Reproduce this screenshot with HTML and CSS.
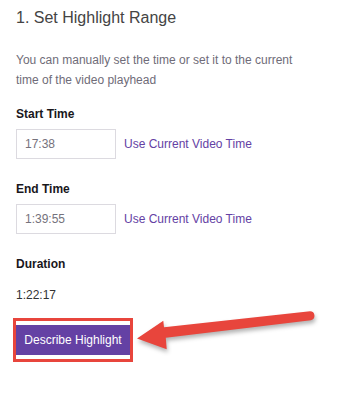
FILE: index.html
```html
<!DOCTYPE html>
<html lang="en">
<head>
  <meta charset="UTF-8" />
  <meta name="viewport" content="width=device-width, initial-scale=1.0"/>
  <title>Set Highlight Range</title>
  <link rel="stylesheet" href="styles.css">
</head>
<body>
  <div class="panel">
    <h2 class="panel-title">1. Set Highlight Range</h2>
    <p class="panel-desc">You can manually set the time or set it to the current time of the video playhead</p>

    <div class="field">
      <label class="field-label" for="start">Start Time</label>
      <div class="field-row">
        <input class="time-input" id="start" type="text" value="17:38">
        <a class="use-current" href="#">Use Current Video Time</a>
      </div>
    </div>

    <div class="field">
      <label class="field-label" for="end">End Time</label>
      <div class="field-row">
        <input class="time-input" id="end" type="text" value="1:39:55">
        <a class="use-current" href="#">Use Current Video Time</a>
      </div>
    </div>

    <div class="field">
      <div class="field-label">Duration</div>
      <div class="duration">1:22:17</div>
    </div>

    <div class="action">
      <span class="callout">
        <button class="btn-primary">Describe Highlight</button>
      </span>
      <!-- annotation arrow pointing at the button -->
      <svg class="arrow" width="190" height="50" viewBox="0 0 190 50">
        <path d="M1 28.5 L27.3 10.7 L28 17.3 L174 1.3 A4.5 4.5 0 0 1 174.9 10.2 L29.8 27.8 L30.7 39.3 Z" fill="#e8453c"/>
      </svg>
    </div>
  </div>
</body>
</html>
```

FILE: styles.css
```css
body {
  margin: 0;
  background: #fff;
  font-family: "Liberation Sans", Arial, sans-serif;
  font-size: 12px;
  line-height: 20px;
  color: #19171c;
}

.panel {
  padding: 8px 16px 0;
}

.panel-title {
  margin: 0;
  font-size: 16px;
  font-weight: normal;
  line-height: 20px;
  color: #444;
}

.panel-desc {
  margin: 22px 0 0;
  max-width: 290px;
  color: #6f6c78;
}

.field {
  margin-top: 20px;
}

.panel-desc + .field {
  margin-top: 14px;
}

.field-label {
  display: block;
  font-weight: bold;
  color: #19171c;
}

.field-row {
  display: flex;
  align-items: center;
  margin-top: 5px;
}

.time-input {
  box-sizing: border-box;
  width: 100px;
  height: 30px;
  margin: 0;
  padding: 0 8px;
  border: 1px solid #dcdae0;
  font-family: inherit;
  font-size: 12px;
  color: #75727c;
  outline: none;
}

.use-current {
  margin-left: 8px;
  color: #6441a4;
  text-decoration: none;
}

.duration {
  margin-top: 11px;
  color: #333;
}

.action {
  position: relative;
  margin-top: 13px;
}

.callout {
  display: inline-flex;
  margin-left: -3px;
  padding: 4px 0;
  border: 3px solid #e8453c;
}

.btn-primary {
  width: 114px;
  height: 30px;
  border: none;
  padding: 0;
  background: #6441a4;
  color: #fff;
  font-family: inherit;
  font-size: 12px;
  cursor: pointer;
}

.arrow {
  position: absolute;
  left: 120px;
  top: -8px;
  overflow: visible;
  filter: drop-shadow(1px 3px 2px rgba(0, 0, 0, 0.3));
}
```
